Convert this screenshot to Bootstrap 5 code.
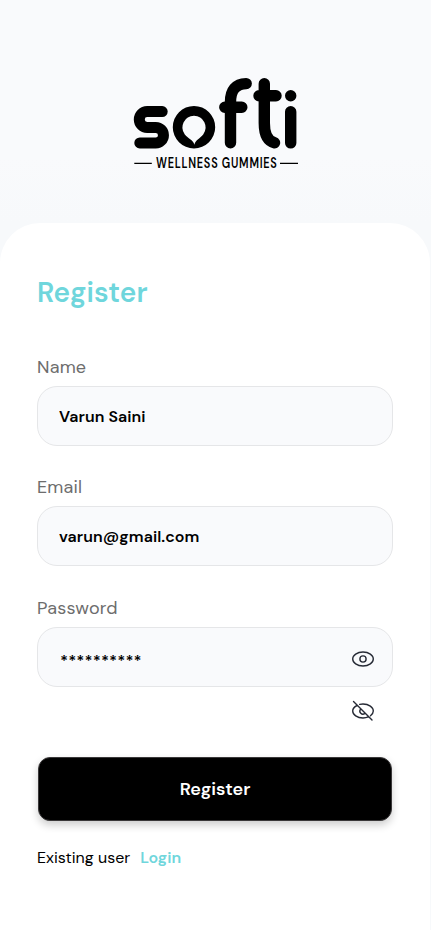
<!DOCTYPE html>
<html lang="en">
<head>
<meta charset="utf-8">
<meta name="viewport" content="width=device-width, initial-scale=1">
<title>Softi – Register</title>
<link href="https://cdn.jsdelivr.net/npm/bootstrap@5.3.0/dist/css/bootstrap.min.css" rel="stylesheet">
<style>
body{font-family:"DM Sans",Inter,sans-serif;background:#f9fafc;color:#000;overflow:hidden}
.screen{height:930px}
.brand{height:223px;padding-top:70px;background:linear-gradient(#f9fafc 70%,#f7f9fb)}
.brand-wrap{background:#f7f9fb}
.sheet{border-radius:40px 40px 0 0;padding:54px 37px 0 37px;margin-right:1px}
.title{font-size:28px;line-height:32px;font-weight:600;color:#6fd6dc;letter-spacing:.1px;margin-bottom:46px}
.form-label{font-size:18px;line-height:24px;color:#6d6d6d;margin-bottom:7px;letter-spacing:.2px}
.field{height:60px;border:1px solid #e5e6e8;border-radius:20px;background:#f9fafc;padding:0 21px 0;font-size:16px;font-weight:600;color:#000;letter-spacing:.08px}
.field-group{margin-bottom:29.4px}
.eye-row{padding:12px 18px 0;height:70.2px}
.submit{height:64px;border-radius:12px;font-size:18px;font-weight:600;background:#000;color:#fff;border:1px solid #3a3839;padding-top:2px;box-shadow:0 4px 8px #0003;margin:0 1px;width:354px}
.foot{font-size:16px;line-height:20px;margin-top:27px}
.login{color:#6fd6dc;font-weight:600;text-decoration:none;margin-left:10px}
.stars{font-size:16px;letter-spacing:.13px;padding:8px 0 0 1px}
.field-secret{padding-right:17px}
</style>
</head>
<body>
<main class="screen d-flex flex-column">
  <header class="brand d-flex justify-content-center align-items-start">
    <svg width="171" height="105" viewBox="130 70 171 105" role="img" aria-label="softi wellness gummies">
      <g fill="none" stroke="#000" stroke-linecap="round" stroke-linejoin="round">
        <path stroke-width="11" d="M162.2 111.6H147.2a7.9 7.9 0 0 0 0 15.8H155.7a7.75 7.75 0 0 1 0 15.5H139.8"/>
        <path stroke-width="11.4" d="M230.5 142.8V102Q230.5 84 246.2 83.6M224.8 107.2H241.8M264.3 83.7V123Q264.3 140 274.5 142.8M259 95.7H276M290.7 111.8V142.9"/>
        <path stroke-width="1.3" stroke-linecap="butt" d="M134.3 163.4H151.8M280 163.4H298"/>
      </g>
      <circle cx="290.7" cy="95.7" r="5.7"/>
      <path fill-rule="evenodd" d="M194 106a21.2 21.2 0 1 0 0 42.4a21.2 21.2 0 0 0 0-42.4ZM194 115.8a11.6 11.6 0 0 1 9.2 18.6C199.5 139 195.5 139.5 194.4 144.8C193.3 139.5 188.5 139 184.8 134.4A11.6 11.6 0 0 1 194 115.8Z"/>
      <text transform="translate(156 168.2) scale(.76 1)" x="0" y="0" font-family="DM Sans, Lato, sans-serif" font-weight="600" font-size="14.4" textLength="159" lengthAdjust="spacing">WELLNESS GUMMIES</text>
    </svg>
  </header>
  <div class="brand-wrap flex-grow-1 d-flex">
    <section class="sheet bg-white flex-grow-1">
      <h1 class="title">Register</h1>
      <form>
        <div class="field-group"><label class="form-label d-block" for="name">Name</label>
          <input id="name" class="field w-100 d-block" type="text" value="Varun Saini"></div>
        <div class="field-group"><label class="form-label d-block" for="email">Email</label>
          <input id="email" class="field w-100 d-block" type="text" value="varun@gmail.com"></div>
        <div><label class="form-label d-block" for="pass">Password</label>
          <div class="field field-secret d-flex align-items-center justify-content-between">
            <span id="pass" class="stars">**********</span>
            <svg class="mt-1" width="24" height="24" viewBox="0 0 24 24" fill="none" stroke="#262a35" stroke-width="1.4"><path d="M1.7 12C1.7 8.2 6.2 5 12 5S22.3 8.2 22.3 12S17.8 19 12 19S1.7 15.8 1.7 12Z"/><circle cx="12" cy="12" r="3.1"/></svg>
          </div>
          <div class="eye-row d-flex justify-content-end">
            <svg width="24" height="24" viewBox="0 0 24 24" fill="none" stroke="#262a35" stroke-width="1.4" stroke-linecap="round"><path d="M6 6.5C3.3 7.8 1.7 9.8 1.7 12C1.7 15.8 6.2 19 12 19C14 19 15.8 18.6 17.4 17.9M8.7 5.4C9.7 5.1 10.8 5 12 5C17.8 5 22.3 8.2 22.3 12C22.3 13.8 21.2 15.4 19.5 16.7M9.4 10.3A3.1 3.1 0 0 0 13.7 14.6M2.5 2.5L21 21"/></svg>
          </div>
        </div>
        <button type="button" class="submit d-block">Register</button>
      </form>
      <p class="foot d-flex mb-0"><span class="exist">Existing user</span><a class="login" href="#">Login</a></p>
    </section>
  </div>
</main>
<script src="https://cdn.jsdelivr.net/npm/bootstrap@5.3.0/dist/js/bootstrap.bundle.min.js"></script>
</body>
</html>
